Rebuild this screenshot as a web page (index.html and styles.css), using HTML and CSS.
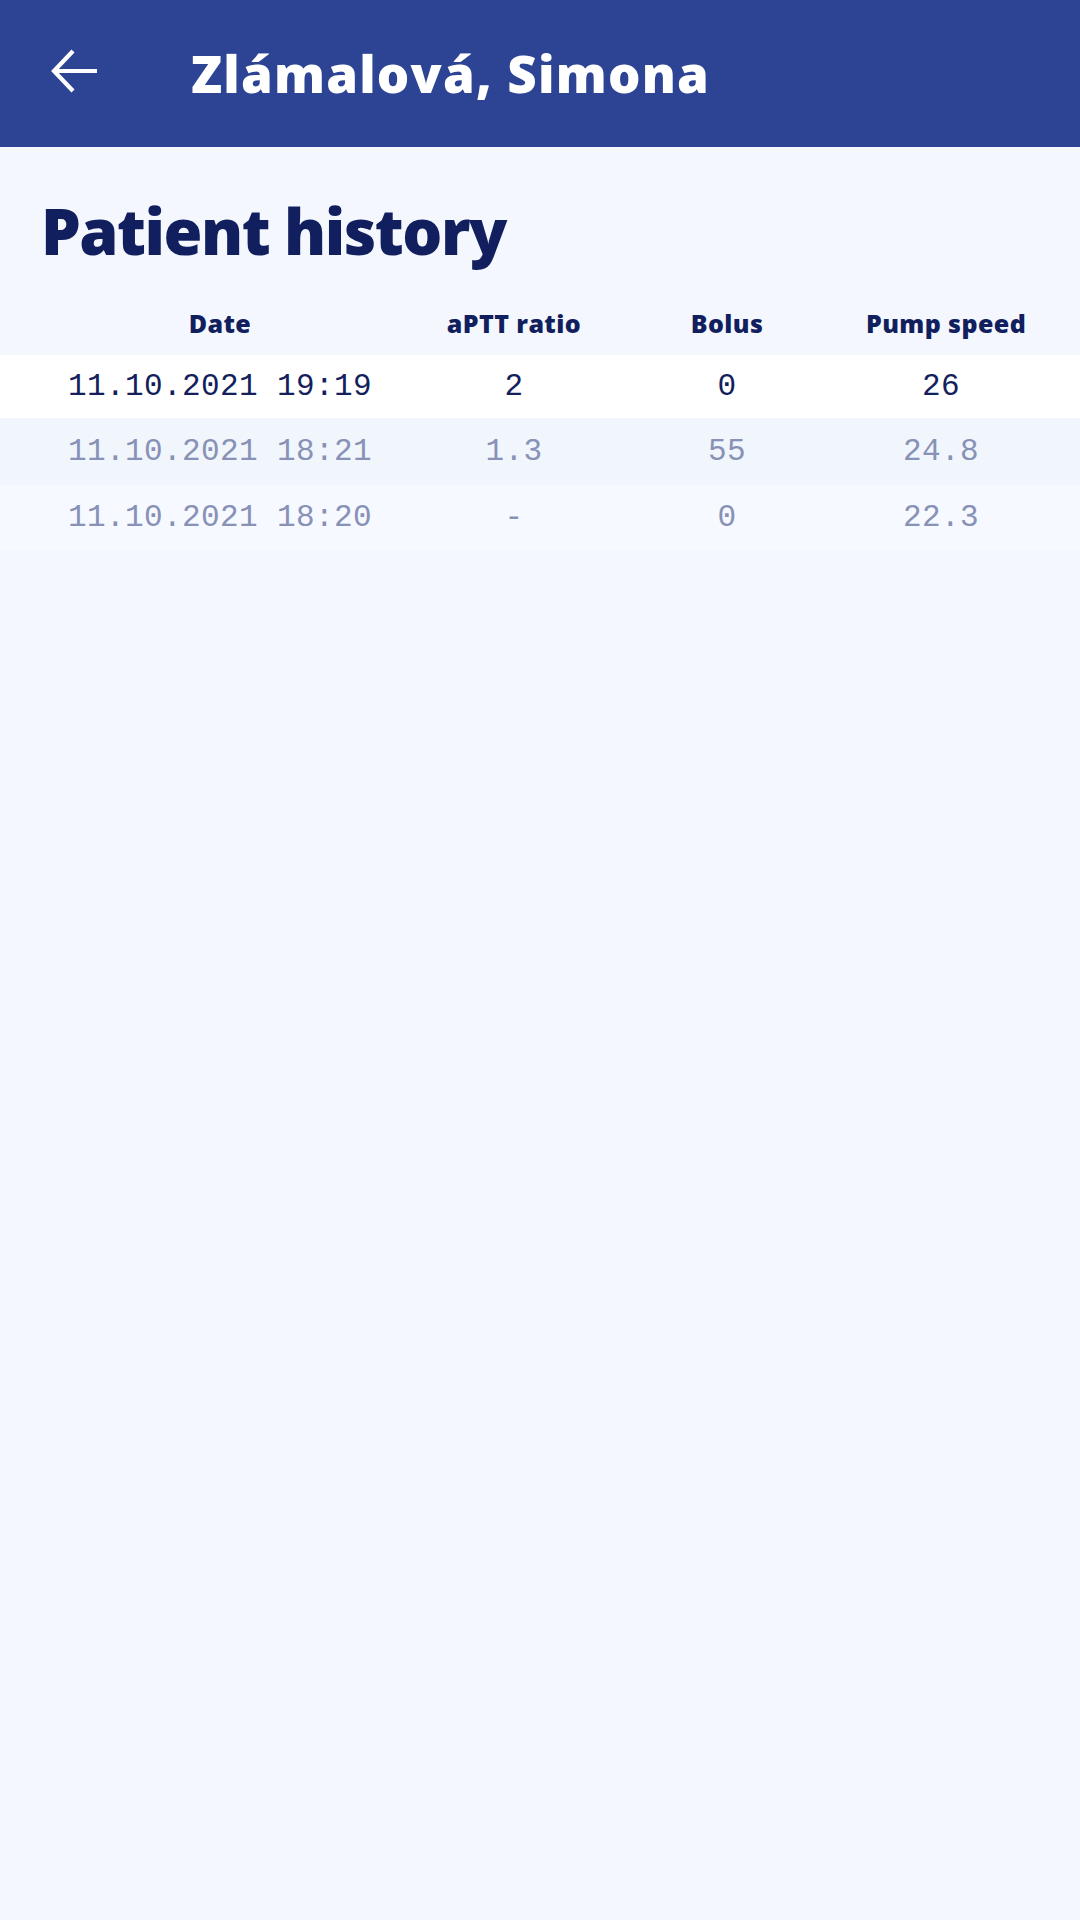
FILE: index.html
```html
<!DOCTYPE html>
<html>
<head>
<meta charset="utf-8">
<link rel="stylesheet" href="styles.css">
</head>
<body>
<header class="appbar">
  <button class="back" aria-label="Back">
    <svg width="48" height="48" viewBox="0 0 48 48"><path d="M48 22 H6 M24 2 L5 22 L24 42" fill="none" stroke="#fff" stroke-width="4.2" stroke-linecap="butt" stroke-linejoin="miter"/></svg>
  </button>
  <h1 class="appbar-title">Zlámalová, Simona</h1>
</header>
<main class="content">
  <h2 class="page-title">Patient history</h2>
  <div class="table">
    <div class="row head">
      <div class="cell">Date</div>
      <div class="cell">aPTT ratio</div>
      <div class="cell">Bolus</div>
      <div class="cell">Pump speed</div>
    </div>
    <div class="row current">
      <div class="cell">11.10.2021 19:19</div>
      <div class="cell">2</div>
      <div class="cell">0</div>
      <div class="cell">26</div>
    </div>
    <div class="row past alt">
      <div class="cell">11.10.2021 18:21</div>
      <div class="cell">1.3</div>
      <div class="cell">55</div>
      <div class="cell">24.8</div>
    </div>
    <div class="row past">
      <div class="cell">11.10.2021 18:20</div>
      <div class="cell">-</div>
      <div class="cell">0</div>
      <div class="cell">22.3</div>
    </div>
  </div>
</main>
</body>
</html>
```
FILE: styles.css
```css
html, body {
  margin: 0;
  padding: 0;
  background: #f4f8fe;
  height: 100%;
}
body {
  font-family: "Open Sans", "Noto Sans", sans-serif;
  color: #121f5e;
}
.appbar {
  height: 147px;
  background: #2d4494;
  display: flex;
  align-items: center;
  box-sizing: border-box;
  padding-left: 49px;
}
.back {
  background: none;
  border: 0;
  padding: 0;
  width: 48px;
  height: 48px;
  display: flex;
  align-items: center;
  justify-content: center;
  margin-top: -2px;
}
.back svg { display: block; }
.appbar-title {
  margin: 0 0 0 94px;
  color: #fff;
  font-family: "Open Sans", sans-serif;
  font-weight: 800;
  font-size: 51px;
  letter-spacing: 1.2px;
  line-height: 1;
}
.content {
  padding-top: 46px;
}
.page-title {
  margin: 0 0 0 41px;
  font-family: "Open Sans", sans-serif;
  font-weight: 800;
  font-size: 63px;
  letter-spacing: -1.5px;
  line-height: 76px;
  color: #121f5e;
}
.table {
  margin-top: 31px;
}
.row {
  display: grid;
  grid-template-columns: 440px 148px 278px 150px;
  align-items: center;
}
.row.head {
  height: 55px;
  font-family: "Open Sans", sans-serif;
  font-weight: 800;
  font-size: 25px;
  letter-spacing: 0.4px;
  color: #121f5e;
}
.row.head .cell { padding-bottom: 10px; }
.cell {
  text-align: center;
  white-space: nowrap;
}
.row.current, .row.past {
  height: 65px;
  font-family: "Liberation Mono", "Courier New", monospace;
  font-size: 31px;
  letter-spacing: 0.4px;
}
.row.current {
  background: #ffffff;
  color: #141f5c;
  height: 63px;
}
.row.past {
  color: #8891b6;
  background: #f6f9ff;
}
.row.past.alt {
  background: #f1f6fd;
  height: 67px;
}
```
